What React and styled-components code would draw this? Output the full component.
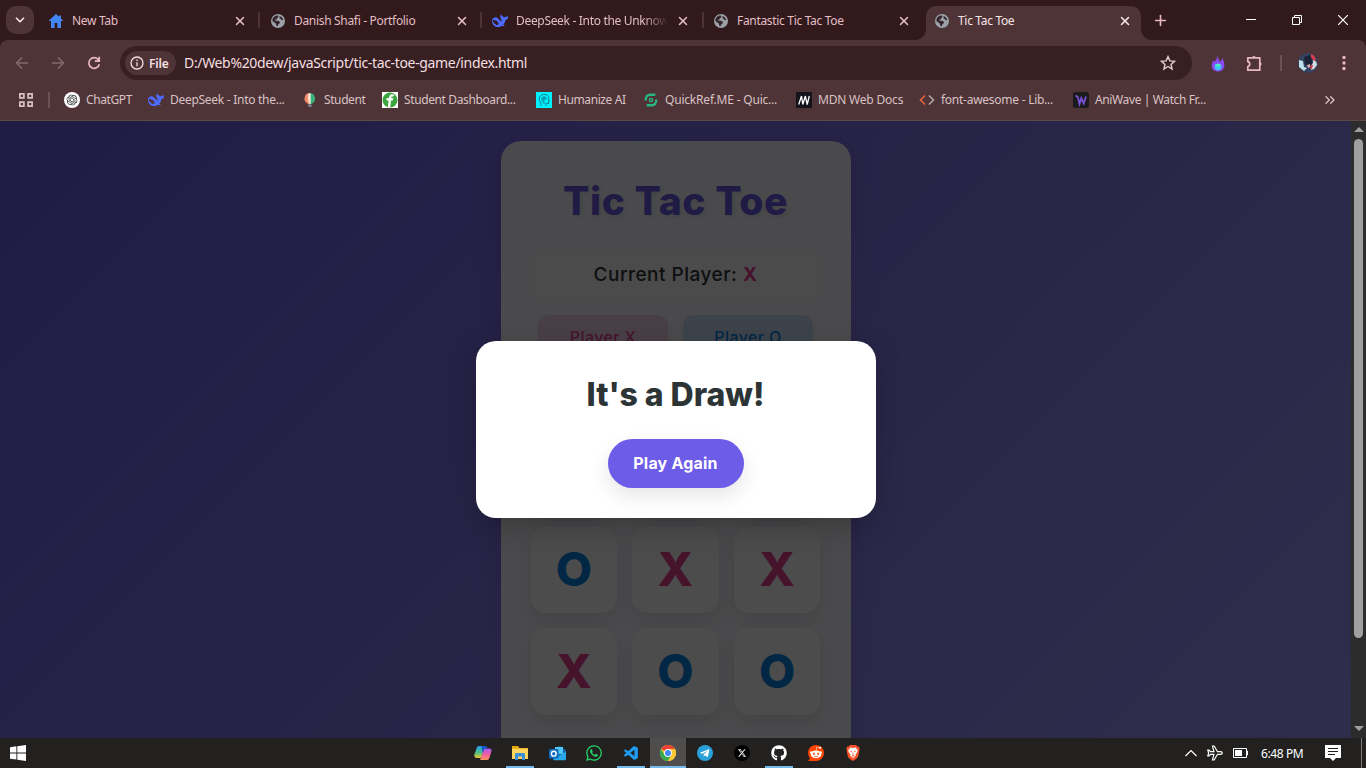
import React from "react";
import styled, { createGlobalStyle, css } from "styled-components";
import { FaWhatsapp, FaGithub, FaRedditAlien, FaTelegramPlane } from "react-icons/fa";
import { SiOpenai } from "react-icons/si";
import { FaXTwitter } from "react-icons/fa6";
import { VscVscode } from "react-icons/vsc";
import { X, Plus, ChevronDown, ChevronsRight } from "lucide-react";

const Global = createGlobalStyle`
  * { box-sizing: border-box; }
  body { margin: 0; overflow: hidden; font-family: "Open Sans", "Noto Sans", sans-serif; }
  svg { display: block; flex: none; }
`;

const ui = css`
  font-family: "Noto Sans", "Open Sans", sans-serif;
  font-size: 12px;
  white-space: nowrap;
`;

const Screen = styled.div`
  width: 1366px;
  height: 768px;
  display: flex;
  flex-direction: column;
  overflow: hidden;
`;

/* Browser chrome */
const TabStrip = styled.div`
  height: 40px;
  flex: none;
  display: flex;
  align-items: center;
  background: #31191c;
  padding-left: 6px;
`;
const TabSearch = styled.div`
  width: 28px;
  height: 28px;
  border-radius: 10px;
  background: #4f3437;
  color: #f4dfe1;
  display: grid;
  place-items: center;
  margin-right: 6px;
`;
const Tab = styled.div`
  ${ui}
  width: ${(p) => p.$w}px;
  height: 34px;
  align-self: flex-end;
  display: flex;
  align-items: center;
  gap: 8px;
  color: ${(p) => (p.$active ? "#f7e6e8" : "#e3bfc4")};
  padding: 0 ${(p) => p.$pr}px 5px ${(p) => p.$pl}px;
  background: ${(p) => (p.$active ? "#4f3437" : "transparent")};
  border-radius: 10px 10px 0 0;
  position: relative;
  ${(p) =>
    p.$active &&
    css`
      &::before, &::after {
        content: "";
        position: absolute;
        bottom: 0;
        width: 10px;
        height: 10px;
      }
      &::before { left: -10px; background: radial-gradient(circle at 0 0, transparent 9.5px, #4f3437 10px); }
      &::after { right: -10px; background: radial-gradient(circle at 100% 0, transparent 9.5px, #4f3437 10px); }
    `}
`;
const IconSlot = styled.span`
  width: 16px;
  height: 16px;
  flex: none;
  display: grid;
  place-items: center;
`;
const TabTitle = styled.span`
  flex: 1;
  letter-spacing: -0.32px;
  ${(p) => p.$fade && "mask-image: linear-gradient(90deg, #000 84%, transparent 100%);"}
`;
const TabSep = styled.i`
  width: 2px;
  height: 16px;
  background: #4f3437;
  border-radius: 1px;
`;
const NewTab = styled.div`
  color: #e7b9bf;
  margin-left: 11px;
`;
const WindowControls = styled.div`
  margin-left: auto;
  display: flex;
  color: #fff;
  > * { width: 46px; height: 40px; display: grid; place-items: center; }
`;
const Toolbar = styled.div`
  height: 46px;
  flex: none;
  background: #4f3437;
  display: flex;
  align-items: center;
  padding-left: 14px;
  border-radius: 8px 8px 0 0;
`;
const ToolbarBack = styled.div`
  background: #31191c;
  flex: none;
`;
const NavIcon = styled.div`
  width: 36px;
  color: ${(p) => (p.$off ? "#84696c" : "#e7b9bf")};
`;
const Omnibox = styled.div`
  width: 1072px;
  height: 34px;
  border-radius: 17px;
  background: #381f22;
  margin-left: -2px;
  padding: 0 16px 0 5px;
  display: flex;
  align-items: center;
  color: #f4dfe1;
`;
const FileChip = styled.div`
  ${ui}
  width: 51px;
  height: 24px;
  border-radius: 12px;
  background: #4f3437;
  display: flex;
  align-items: center;
  gap: 5px;
  padding-left: 5px;
  font-weight: 600;
  letter-spacing: -0.2px;
`;
const Url = styled.span`
  ${ui}
  font-size: 14px;
  line-height: 18px;
  margin: -1px 0 0 8px;
  flex: 1;
  letter-spacing: -0.34px;
`;
const ToolbarActions = styled.div`
  flex: 1;
  display: flex;
  align-items: center;
  color: #e7b9bf;
  padding-left: 19px;
`;
const ExtensionSlot = styled.div`
  margin-left: 21px;
`;
const Divider = styled.i`
  width: 2px;
  height: 16px;
  background: #6d5054;
`;
const ToolbarDivider = styled(Divider)`
  margin: 0 16px 0 17px;
`;
const Avatar = styled.div`
  width: 20px;
  height: 20px;
  border-radius: 50%;
  overflow: hidden;
  margin-right: 24px;
`;
const Bookmarks = styled.div`
  height: 35px;
  flex: none;
  background: #4f3437;
  border-bottom: 1px solid #5c4a47;
  display: flex;
  align-items: center;
  padding: 0 0 7px 18px;
  color: #d8c2c4;
`;
const Bookmark = styled.div`
  ${ui}
  width: ${(p) => p.$w}px;
  display: flex;
  align-items: center;
  gap: 6px;
  letter-spacing: ${(p) => p.$ls}px;
`;
const BookmarkDivider = styled(Divider)`
  margin: 0 14px;
`;

/* Page */
const Viewport = styled.div`
  flex: 1;
  min-height: 0;
  display: flex;
  overflow: hidden;
`;
const Page = styled.div`
  width: 1351px;
  position: relative;
  overflow: hidden;
`;
const GameBody = styled.div`
  height: 722px;
  padding: 20px;
  background: linear-gradient(135deg, #6c5ce7, #a29bfe);
  display: flex;
  justify-content: center;
  font-family: "Inter", "Open Sans", sans-serif;
`;
const GameCard = styled.div`
  width: 350px;
  height: 682px;
  padding: 30px;
  border-radius: 20px;
  background: rgba(255, 255, 255, 0.95);
  box-shadow: 0 10px 30px rgba(0, 0, 0, 0.1);
  display: flex;
  flex-direction: column;
`;
const GameTitle = styled.h1`
  margin: 0 0 20px;
  font-size: 39px;
  line-height: 60px;
  font-weight: 800;
  color: #6c5ce7;
  text-align: center;
  white-space: nowrap;
  letter-spacing: 0.6px;
  text-shadow: 2px 2px 4px rgba(0, 0, 0, 0.1);
`;
const Status = styled.div`
  height: 49px;
  line-height: 48px;
  border-radius: 10px;
  background: rgba(255, 255, 255, 0.3);
  text-align: center;
  font-size: 19px;
  font-weight: 500;
  letter-spacing: 0.5px;
  color: #2d3436;
  margin-bottom: 15px;
  white-space: nowrap;
  b { color: #e84393; }
`;
const Players = styled.div`
  display: flex;
  justify-content: center;
  gap: 15px;
  height: 110px;
`;
const Player = styled.div`
  width: 130px;
  height: 90px;
  padding-top: 9px;
  border-radius: 10px;
  text-align: center;
  font-size: 16px;
  line-height: 26px;
  font-weight: 500;
  letter-spacing: 0.4px;
  color: ${(p) => (p.$o ? "#0984e3" : "#e84393")};
  background: ${(p) => (p.$o ? "rgba(9,132,227,.2)" : "rgba(232,67,147,.2)")};
`;
const Board = styled.div`
  display: grid;
  grid-template-columns: repeat(3, 1fr);
  grid-auto-rows: 86.67px;
  gap: 15px;
`;
const Cell = styled.div`
  border-radius: 15px;
  background: #fff;
  box-shadow: 0 8px 20px rgba(0, 0, 0, 0.1);
  display: grid;
  place-items: center;
  padding-bottom: 2px;
  font-size: 47px;
  font-weight: 800;
  color: ${(p) => (p.$mark === "O" ? "#0984e3" : "#e84393")};
`;
const Overlay = styled.div`
  position: absolute;
  inset: 0;
  background: rgba(0, 0, 0, 0.7);
  display: flex;
  align-items: center;
  justify-content: center;
  font-family: "Inter", "Open Sans", sans-serif;
`;
const Modal = styled.div`
  width: 400px;
  height: 177px;
  border-radius: 20px;
  background: #fff;
  box-shadow: 0 10px 30px rgba(0, 0, 0, 0.2);
  padding: 30px;
  display: flex;
  flex-direction: column;
  align-items: center;
`;
const ModalTitle = styled.h2`
  margin: 0 0 20px;
  font-size: 32px;
  line-height: 48px;
  font-weight: 800;
  color: #2d3436;
  white-space: nowrap;
`;
const PlayAgain = styled.button`
  width: 136px;
  height: 49px;
  flex: none;
  border: 0;
  border-radius: 25px;
  background: #6c5ce7;
  color: #fff;
  font: 700 16px "Inter", sans-serif;
  letter-spacing: 0.2px;
  padding: 0 0 2px;
  white-space: nowrap;
  box-shadow: 0 8px 20px rgba(0, 0, 0, 0.1);
`;
const Scrollbar = styled.div`
  width: 15px;
  background: #2c2c2c;
  display: flex;
  flex-direction: column;
  align-items: center;
  padding: 6px 0 7px;
`;
const Thumb = styled.div`
  width: 9px;
  height: 499px;
  margin: 7px 0 auto;
  border-radius: 5px;
  background: #9f9f9f;
`;
const Arrow = styled.i`
  border: 5px solid transparent;
  ${(p) => (p.$up ? "border-top: 0; border-bottom-color: #9f9f9f;" : "border-bottom: 0; border-top-color: #9f9f9f;")}
`;

/* Taskbar */
const Taskbar = styled.div`
  height: 30px;
  flex: none;
  display: flex;
  background: #22211f;
  color: #fff;
`;
const Start = styled.div`
  width: 465px;
  padding: 7px 0 0 10px;
`;
const TaskbarApp = styled.div`
  width: 36px;
  margin-right: 1px;
  height: 30px;
  display: grid;
  place-items: center;
  background: ${(p) => (p.$active ? "#4f4e4c" : "transparent")};
  position: relative;
  ${(p) =>
    p.$open &&
    css`
      &::after {
        content: "";
        position: absolute;
        bottom: 0;
        left: ${p.$active ? 0 : 4}px;
        right: ${p.$active ? 0 : 4}px;
        height: 2px;
        background: #76b9ed;
      }
    `}
`;
const Tray = styled.div`
  ${ui}
  margin-left: auto;
  display: flex;
  align-items: center;
`;
const TrayIcons = styled.div`
  display: flex;
  align-items: center;
  gap: 10px;
`;
const Clock = styled.span`
  width: 44px;
  margin: 0 20px 0 12px;
  letter-spacing: -0.4px;
`;
const ShowDesktop = styled.i`
  width: 5px;
  height: 30px;
  margin-left: 20px;
  border-left: 1px solid #777;
`;

const Globe = () => (
  <svg width="14" height="14" viewBox="0 0 16 16">
    <circle cx="8" cy="8" r="8" fill="#9aa0a6" />
    <path d="M7 1.500c2 1 2 2 .5 2.700-1 .6-.2 1.700-1.800 2-1.400.3-1 1.500.3 1.500 2-.2 3.400 0 4 1.500.7 1.300-.3 1.700-1.300 2.300-.7.6-.4 2-1.700 2.400-1.400.1-.9-2-1.500-3-.9-1.300-2.900-1.300-4-3.500C1.700 4.500 4 2 7 1.500zM10 2.200c2 .8 3.500 2.500 4 4.500-1.300.9-2.500.2-3-.9-.4-.9-1.700-1-1.300-2z" fill="#35262b" />
  </svg>
);
const Home = () => (
  <svg width="16" height="16" viewBox="0 0 16 16">
    <path d="M8 1 .5 8H3v7h3.600v-5h2.800v5H13V8h2.500L13 5.600V2.500h-2v1.200z" fill="#4285f4" />
  </svg>
);
const Whale = () => (
  <svg width="16" height="16" viewBox="0 0 24 24">
    <path d="M23.600 4.700c-.3-.1-.4.100-.5.200-.6.600-1.300.9-2.200.8-1.200-.1-2.200.3-3.100 1.200-.2-1.100-.8-1.700-1.800-2.100-.5-.2-1-.5-1.300-1-.3-.4-.3-.8-.500-1.200-.1-.2-.2-.5-.5-.5-.4 0-.5.200-.6.500-.5.900-.7 1.900-.7 2.900.1 2.300 1 4.100 2.900 5.400.2.100.3.300.2.500l-.4 1.400c-.1.300-.2.300-.5.200-1-.5-1.800-1.100-2.600-1.800-1.300-1.300-2.500-2.700-4-3.800C5.600 6 4.600 6.700 3.400 7 1 7.500-.3 9.800.1 13c.5 4.300 4.300 8 8.900 8 2.400 0 4.300-.5 6.100-1.900.4.200.9.300 1.700.4.600.1 1.200 0 1.600-.1.700-.1.600-.8.400-.9-2-.9-1.600-.6-2-.8 1-1.200 2.600-3.200 3-5.600.1-.5 0-.8 0-1.200 0-.2.100-.3.300-.3 1.500-.2 3-1 3.600-2.800.3-.9.300-1.800.3-2.700 0-.2-.1-.3-.4-.4zM12.100 17.600c-2-1.500-2.900-2-3.300-2-.4 0-.3.400-.2.700.1.300.3.500.5.800.2.200.3.600-.2.800-1 .6-2.700-.2-2.800-.3-2-1.200-3.600-2.700-4.800-4.800-.7-1.300 0-2.200 1.500-2.200 2.200.1 4 1.100 5.500 2.600 1 1 1.500 2.100 2.200 3.100.8 1.100 1.600 1.600 2.400 2.200-.3 0-.6-.5-.8-.9zm2.800-4.700c-.7.3-1.300-.5-1.400-1 0-.6.5-1 1-.8 1 .3 1.100 1.500.4 1.800z" fill="#4d6bfe" />
  </svg>
);
const ChatGpt = () => (
  <svg width="16" height="16" viewBox="0 0 16 16">
    <circle cx="8" cy="8" r="8" fill="#fff" />
    <SiOpenai x="2.500" y="2.500" size={11} color="#222" />
  </svg>
);
const Balloon = () => (
  <svg width="16" height="16" viewBox="0 0 16 16">
    <path d="M8 1a5.500 5.500 0 0 0-2.500 10.400L7 13V1z" fill="#f08a6a" />
    <path d="M8 1v12l2-1.600A5.500 5.500 0 0 0 8 1z" fill="#35b27a" />
    <path d="M6.500 1.300h2.200V12H7.300c-1.500-3-1.800-7-.8-10.700z" fill="#f4e6cf" />
    <path d="M6.500 12.500h3V15h-3z" fill="#7c8794" />
  </svg>
);
const Dashboard = () => (
  <svg width="16" height="16" viewBox="0 0 16 16">
    <path fill="#fff" d="M0 0h16v16H0z" />
    <circle cx="8" cy="8" r="7.500" fill="#3da53f" />
    <path d="M7 15.500 8.300 5C8.600 3 10.500 2.600 11.500 4.200M4.500 7.700c2-.9 4-.9 6.500-.4" stroke="#fff" strokeWidth="2.300" fill="none" />
  </svg>
);
const Humanize = () => (
  <svg width="16" height="16" viewBox="0 0 16 16" fill="none" stroke="#087e8d" strokeWidth="1">
    <path fill="#00f0ff" stroke="none" d="M0 0h16v16H0z" />
    <path d="M5 14v-3C2 8 3 3 7.500 2.500S13 5 12.500 7l1 2h-1v2.500H10V14M8 12V9.500a2.300 2.300 0 1 1 2.300-2.300" />
    <circle cx="8" cy="7" r="1" />
  </svg>
);
const QuickRef = () => (
  <svg width="14" height="14" viewBox="0 0 16 16" fill="none" stroke="#28b67f" strokeWidth="2.600">
    <path d="M13 2H7C3.500 2 2 4.500 2 8.500M3 14h6c3.500 0 5-2.500 5-6.500" />
    <circle cx="8" cy="8" r="1.800" strokeWidth="1.600" />
  </svg>
);
const Mdn = () => (
  <svg width="16" height="16" viewBox="0 0 16 16">
    <path fill="#15141a" d="M0 0h16v16H0z" />
    <path d="M2.700 12.500 5.500 4M6.800 12.500 9.300 4M11.200 12.500 13.300 4M5.500 4l1.300 8.500M9.300 4l1.900 8.500" stroke="#fff" strokeWidth="1.300" fill="none" />
  </svg>
);
const CodeTag = () => (
  <svg width="16" height="16" viewBox="0 0 16 16" fill="none" strokeWidth="1.600">
    <path d="M6 3.500 1.500 8 6 12.500" stroke="#e8623a" />
    <path d="M10 3.500 14.500 8 10 12.500" stroke="#b3a5a6" />
  </svg>
);
const AniWave = () => (
  <svg width="16" height="16" viewBox="0 0 16 16">
    <rect width="16" height="16" rx="2.500" fill="#1b1a1d" />
    <path d="M2.500 3.500 4.800 5l1.700 7L8.300 6l2.400 5.500L13 4.500" stroke="#7a52d8" strokeWidth="1.800" fill="none" />
  </svg>
);
const AppsGrid = () => (
  <svg width="16" height="16" viewBox="0 0 16 16" fill="none" stroke="#d8c2c4" strokeWidth="1.700">
    <path d="M1.900 1.900h4v4h-4zM10.100 1.900h4v4h-4zM1.900 10.100h4v4h-4zM10.100 10.100h4v4h-4z" />
  </svg>
);
const ArrowIcon = ({ flip }) => (
  <svg width="16" height="16" viewBox="0 0 16 16" fill="none" stroke="currentColor" strokeWidth="1.600" transform={flip ? "scale(-1 1)" : undefined}>
    <path d="M14 8H3M8 2.500 2.500 8 8 13.500" />
  </svg>
);
const Reload = () => (
  <svg width="16" height="16" viewBox="0 0 16 16" fill="none" stroke="currentColor" strokeWidth="1.700">
    <path d="M12.500 5A5.300 5.300 0 1 0 13.300 9.200M13.200 1.800v4.400H8.800" />
  </svg>
);
const Info = () => (
  <svg width="14" height="14" viewBox="0 0 14 14" fill="none" stroke="currentColor" strokeWidth="1.300">
    <circle cx="7" cy="7" r="6" />
    <path d="M7 6.200v4M7 3.600v1.400" />
  </svg>
);
const Star = () => (
  <svg width="16" height="16" viewBox="0 0 16 16" fill="none" stroke="#e6cdd0" strokeWidth="1.400">
    <path d="m8 1.600 1.900 4.300 4.700.4-3.600 3.100 1.100 4.600L8 11.500 3.900 14 5 9.400 1.400 6.300l4.700-.4z" />
  </svg>
);
const Flame = () => (
  <svg width="14" height="17" viewBox="0 0 14 17">
    <path d="M6.500.500c.5 3 2 4.500 2.500 6.500 1-.8 1.800-2 2.200-4C13 6 13.500 8.500 13.300 11c-.2 3.300-3 5.500-6.300 5.500S.700 14.300.700 11c0-2.500 1-3.700 1.600-6 .5 1 .9 1.700 1.400 2C4.700 5 6.300 3.500 6.500.5z" fill="#8a4af3" />
    <path d="M7 8.500 10.300 10v3.700L7 15.500l-3.300-1.800V10z" fill="#3dc9f2" />
    <path d="M7 8.500 10.300 10 7 11.800 3.700 10z" fill="#52f0c0" />
  </svg>
);
const Puzzle = () => (
  <svg width="17" height="17" viewBox="0 0 17 17" fill="none" stroke="currentColor" strokeWidth="1.700">
    <path d="M1.800 2.800h12v12.400h-12v-3.700c2.600-.3 2.600-4.500 0-4.800z" strokeLinejoin="round" />
    <path d="M5.800 2.500a2.200 2.200 0 0 1 4.200 0zM14 7a2.200 2.200 0 0 1 0 4.200z" fill="currentColor" stroke="none" />
  </svg>
);
const AvatarArt = () => (
  <svg width="20" height="20" viewBox="0 0 20 20">
    <path fill="#33435f" d="M0 0h20v20H0z" />
    <path d="m1 7 4 1 1 6 3 1-3 3-5-4z" fill="#bfe0ea" />
    <path d="M15 7c2 0 4 2 4 5l-3 4-3 1 1-5z" fill="#d0dbe2" />
    <path d="M13 1c3 1 4 3 5 6l-2 1-3-4zM13 12l2 0-1 4-2-1z" fill="#e03a4a" />
    <path d="m6 4 6-2 3 8-3 2-5 0z" fill="#1c2138" />
    <path d="m9 12 3-1 0 3-2 1z" fill="#d9a5ac" />
  </svg>
);
const Kebab = () => (
  <svg width="4" height="16" viewBox="0 0 4 16" fill="currentColor">
    <circle cx="2" cy="2.500" r="1.700" /><circle cx="2" cy="8" r="1.700" /><circle cx="2" cy="13.500" r="1.700" />
  </svg>
);
const WindowsLogo = () => (
  <svg width="16" height="16" viewBox="0 0 16 16" fill="#fff">
    <path d="M0 2.200 6.400 1.300v6.200H0zM7.300 1.200 16 0v7.500H7.300zM0 8.400h6.400v6.200L0 13.700zM7.300 8.400H16V16l-8.700-1.200z" />
  </svg>
);
const Copilot = () => (
  <svg width="18" height="16" viewBox="0 0 18 16">
    <defs>
      <linearGradient id="cpa" x1="0" y1="0" x2="0" y2="1"><stop offset="0" stopColor="#1aa0f0" /><stop offset=".6" stopColor="#58c27a" /><stop offset="1" stopColor="#f7c52d" /></linearGradient>
      <linearGradient id="cpb" x1="0" y1="0" x2="0" y2="1"><stop offset="0" stopColor="#a25bf0" /><stop offset=".5" stopColor="#ef5ca8" /><stop offset="1" stopColor="#fb9358" /></linearGradient>
    </defs>
    <path d="M5 1h6L8 11c-.4 1.200-1 2-2.300 2H3c-2.500 0-3.200-1.800-2.500-4L2.700 3C3.100 1.800 3.700 1 5 1z" fill="url(#cpa)" />
    <path d="M13 15H6l3.500-9.500C10 4 10.600 3.500 12 3.500h3c2.500 0 3 1.500 2.300 3.500l-2 6c-.4 1.200-1 2-2.300 2z" fill="url(#cpb)" />
    <path d="M7.500 1h4c1.300 0 1.700 1 2 2.500H12c-1.400 0-2 .7-2.500 2L8.500 8z" fill="#1757c9" />
  </svg>
);
const Folder = () => (
  <svg width="18" height="16" viewBox="0 0 18 16">
    <path d="M1 1h6l1.500 2H17v4H1z" fill="#e5a50f" />
    <path d="M1 3.700h16V14H1z" fill="#ffd560" />
    <path d="M4 15V9.500c0-.8.500-1.500 1.300-1.500h7.400c.8 0 1.300.7 1.300 1.500V15h-3v-3.500H7V15z" fill="#3d8fd8" />
  </svg>
);
const Outlook = () => (
  <svg width="17" height="16" viewBox="0 0 17 16">
    <path d="m4 5 6.500-4L17 5v9.500H4z" fill="#1260ad" />
    <path d="M6 2h8v7H6z" fill="#50c8f5" />
    <path d="m4 14.500 13-8V14c0 .8-.5 1.300-1.300 1.300H5z" fill="#28a8ea" />
    <rect y="4" width="9.500" height="9.500" rx="1" fill="#0f6cbd" />
    <circle cx="4.800" cy="8.700" r="2.400" fill="none" stroke="#fff" strokeWidth="1.400" />
  </svg>
);
const Chrome = () => (
  <svg width="16" height="16" viewBox="0 0 16 16">
    <circle cx="8" cy="8" r="8" fill="#fcc934" />
    <path d="M8 8 1.070 4A8 8 0 0 1 14.930 4H8z" fill="#ea4335" />
    <path d="M1.070 4A8 8 0 0 0 8 16l3.460-6L8 8 4.500 10z" fill="#34a853" />
    <path d="M8 4h6.930A8 8 0 0 1 8 16l3.460-6z" fill="#fcc934" />
    <circle cx="8" cy="8" r="3.900" fill="#fff" />
    <circle cx="8" cy="8" r="3" fill="#4285f4" />
  </svg>
);
const Disc = ({ bg, children }) => (
  <svg width="16" height="16" viewBox="0 0 16 16">
    <circle cx="8" cy="8" r="8" fill={bg} />
    {children}
  </svg>
);
const Reddit = () => (
  <Disc bg="#ff4500">
    <path d="M0 16h8V8H2.500C2.500 12 2 14 0 16z" fill="#ff4500" />
    <FaRedditAlien x="1.500" y="1" size={13} color="#fff" />
  </Disc>
);
const Brave = () => (
  <svg width="14" height="16" viewBox="0 0 14 16">
    <path d="M4 0h6l1.400 1.500L13 1.700l.6 2L12.300 11c-.4 1.700-1.600 2.600-5.300 5-3.700-2.400-4.900-3.300-5.300-5L.4 3.700l.6-2 1.600-.2z" fill="#fb542b" />
    <path d="M4.500 2.600 7 3l2.500-.4 2.300 2.700-.7 2-1.500 2 .2 1.200L7 13l-2.800-2.500.2-1.200-1.500-2-.7-2z" fill="#fff" />
    <path d="m3.700 5.600 2.300.7-.4 1.200zM10.300 5.600 8 6.300l.4 1.200zM7 7l.6 2L7 10l-.6-1zM5.500 10.500 7 10l1.500.5L7 11.700z" fill="#fb542b" />
  </svg>
);
const Caret = () => (
  <svg width="12" height="8" viewBox="0 0 12 8" fill="none" stroke="#fff" strokeWidth="1.200">
    <path d="m.5 7 5.500-5.500L11.500 7" />
  </svg>
);
const Plane = () => (
  <svg width="16" height="16" viewBox="0 0 16 16" fill="none" stroke="#fff" strokeWidth="1.200">
    <path d="M15.300 8c0-.9-.9-1.300-2-1.300h-2.800L7.200 1H5.500l1.400 5.700H3.500L2 5H.8l.8 3-.8 3H2l1.500-1.700h3.400L5.500 15h1.700l3.300-5.700h2.800c1.100 0 2-.4 2-1.300z" />
  </svg>
);
const Battery = () => (
  <svg width="16" height="10" viewBox="0 0 16 10">
    <path d="M.5.500h13v9H.5zM14 3h.5v4H14" stroke="#fff" fill="none" />
    <path d="M2 2h7v6H2z" fill="#fff" />
  </svg>
);
const Notice = () => (
  <svg width="16" height="16" viewBox="0 0 16 16">
    <path d="M0 0h16v13h-5l-3 3-3-3H0z" fill="#fff" />
    <path d="M3 3.500h10M3 6.500h10M3 9.500h7" stroke="#22211f" />
  </svg>
);

const tabs = [
  { icon: <Home />, title: "New Tab", w: 218, pl: 8, pr: 11 },
  { icon: <Globe />, title: "Danish Shafi - Portfolio", w: 220, pl: 10, pr: 11 },
  { icon: <Whale />, title: "DeepSeek - Into the Unknow", w: 220, pl: 10, pr: 12, fade: true },
  { icon: <Globe />, title: "Fantastic Tic Tac Toe", w: 222, pl: 9, pr: 15 },
  { icon: <Globe />, title: "Tic Tac Toe", w: 215, pl: 8, pr: 9, active: true },
];

const bookmarks = [
  { icon: <ChatGpt />, title: "ChatGPT", w: 84, ls: -0.4 },
  { icon: <Whale />, title: "DeepSeek - Into the...", w: 154, ls: -0.28 },
  { icon: <Balloon />, title: "Student", w: 80, ls: -0.4 },
  { icon: <Dashboard />, title: "Student Dashboard...", w: 154, ls: -0.38 },
  { icon: <Humanize />, title: "Humanize AI", w: 107, ls: -0.4 },
  { icon: <QuickRef />, title: "QuickRef.ME - Quic...", w: 153, ls: -0.2 },
  { icon: <Mdn />, title: "MDN Web Docs", w: 123, ls: -0.2 },
  { icon: <CodeTag />, title: "font-awesome - Lib...", w: 154, ls: -0.26 },
  { icon: <AniWave />, title: "AniWave | Watch Fr...", w: 249, ls: -0.38 },
];

const cells = ["", "", "", "O", "X", "X", "X", "O", "O"];

const apps = [
  { icon: <Copilot /> },
  { icon: <Folder />, open: true },
  { icon: <Outlook /> },
  { icon: <FaWhatsapp size={18} color="#25d366" /> },
  { icon: <VscVscode size={17} color="#1f9cf0" />, open: true },
  { icon: <Chrome />, open: true, active: true },
  { icon: <Disc bg="#2aa1da"><FaTelegramPlane x="2.500" y="3" size={10.500} color="#fff" /></Disc> },
  { icon: <Disc bg="#000"><FaXTwitter x="3.500" y="3.500" size={9} color="#fff" /></Disc> },
  { icon: <FaGithub size={16} color="#fff" />, open: true },
  { icon: <Reddit /> },
  { icon: <Brave /> },
];

export default function App() {
  return (
    <Screen>
      <Global />
      <TabStrip>
        <TabSearch><ChevronDown size={14} strokeWidth={3} /></TabSearch>
        {tabs.map((t, i) => (
          <React.Fragment key={t.title}>
            <Tab $w={t.w} $pl={t.pl} $pr={t.pr} $active={t.active}>
              <IconSlot>{t.icon}</IconSlot>
              <TabTitle $fade={t.fade}>{t.title}</TabTitle>
              <X size={14} strokeWidth={2.600} />
            </Tab>
            {i < 3 && <TabSep />}
          </React.Fragment>
        ))}
        <NewTab><Plus size={17} strokeWidth={2.300} /></NewTab>
        <WindowControls>
          <div><svg width="10" height="10"><path d="M0 4.500h10" stroke="#fff" /></svg></div>
          <div><svg width="10" height="10" fill="none" stroke="#fff"><path d="M.5 2.500h7v7h-7zM2.500 2.500v-2h7v7h-2" /></svg></div>
          <div><svg width="10" height="10"><path d="m0 0 10 10M10 0 0 10" stroke="#fff" strokeWidth="1.200" /></svg></div>
        </WindowControls>
      </TabStrip>
      <ToolbarBack>
        <Toolbar>
          <NavIcon $off><ArrowIcon /></NavIcon>
          <NavIcon $off><ArrowIcon flip /></NavIcon>
          <NavIcon><Reload /></NavIcon>
          <Omnibox>
            <FileChip><Info />File</FileChip>
            <Url>D:/Web%20dew/javaScript/tic-tac-toe-game/index.html</Url>
            <Star />
          </Omnibox>
          <ToolbarActions>
            <Flame />
            <ExtensionSlot><Puzzle /></ExtensionSlot>
            <ToolbarDivider />
            <Avatar><AvatarArt /></Avatar>
            <Kebab />
          </ToolbarActions>
        </Toolbar>
      </ToolbarBack>
      <Bookmarks>
        <AppsGrid />
        <BookmarkDivider />
        {bookmarks.map((b) => (
          <Bookmark key={b.title} $w={b.w} $ls={b.ls}><IconSlot>{b.icon}</IconSlot>{b.title}</Bookmark>
        ))}
        <ChevronsRight size={16} />
      </Bookmarks>
      <Viewport>
        <Page>
          <GameBody>
            <GameCard>
              <GameTitle>Tic Tac Toe</GameTitle>
              <Status>Current Player: <b>X</b></Status>
              <Players>
                <Player>Player X</Player>
                <Player $o>Player O</Player>
              </Players>
              <Board>
                {cells.map((c, i) => <Cell key={i} $mark={c}>{c}</Cell>)}
              </Board>
            </GameCard>
          </GameBody>
          <Overlay>
            <Modal>
              <ModalTitle>It's a Draw!</ModalTitle>
              <PlayAgain>Play Again</PlayAgain>
            </Modal>
          </Overlay>
        </Page>
        <Scrollbar>
          <Arrow $up />
          <Thumb />
          <Arrow />
        </Scrollbar>
      </Viewport>
      <Taskbar>
        <Start><WindowsLogo /></Start>
        {apps.map((a, i) => (
          <TaskbarApp key={i} $open={a.open} $active={a.active}>{a.icon}</TaskbarApp>
        ))}
        <Tray>
          <TrayIcons>
            <Caret />
            <Plane />
            <Battery />
          </TrayIcons>
          <Clock>6:48 PM</Clock>
          <Notice />
          <ShowDesktop />
        </Tray>
      </Taskbar>
    </Screen>
  );
}
